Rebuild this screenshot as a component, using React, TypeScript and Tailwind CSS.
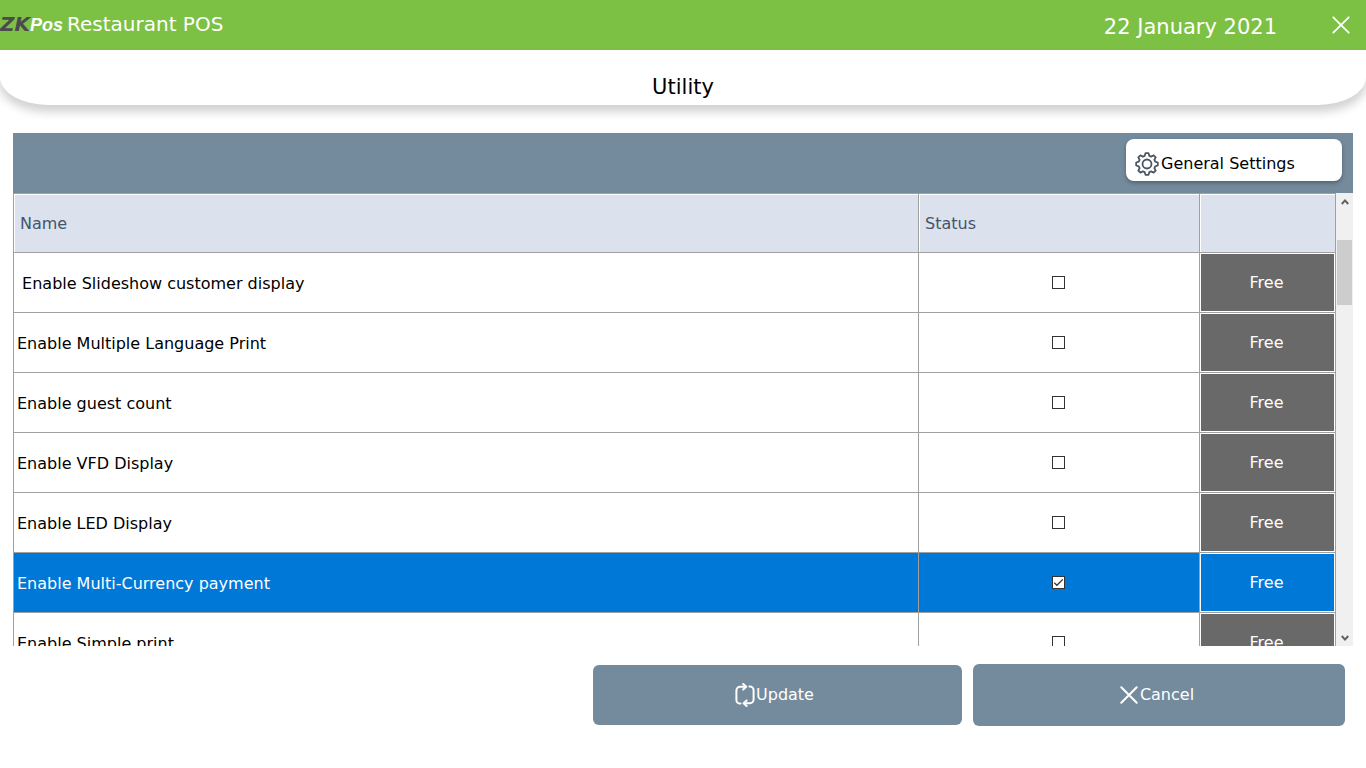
import { useState } from "react";

interface Feature {
  name: string;
  enabled: boolean;
}

const initialFeatures: Feature[] = [
  { name: " Enable Slideshow customer display", enabled: false },
  { name: "Enable Multiple Language Print", enabled: false },
  { name: "Enable guest count", enabled: false },
  { name: "Enable VFD Display", enabled: false },
  { name: "Enable LED Display", enabled: false },
  { name: "Enable Multi-Currency payment", enabled: true },
  { name: "Enable Simple print", enabled: false },
];

function Logo() {
  return (
    <span className="flex items-baseline leading-6 font-bold italic">
      <span className="font-['DejaVu_Sans'] text-xl leading-6 text-[#4a4a4f]">ZK</span>
      <span className="font-['Liberation_Sans'] text-lg leading-6 text-white">Pos</span>
    </span>
  );
}

function CrossIcon({ strokeWidth }: { strokeWidth: number }) {
  return (
    <svg
      className="h-[18px] w-[18px]"
      viewBox="0 0 18 18"
      fill="none"
      stroke="currentColor"
      strokeWidth={strokeWidth}
      strokeLinecap="round"
    >
      <path d="M1.3 1.3 16.7 16.7M16.7 1.3 1.3 16.7" />
    </svg>
  );
}

function GearIcon() {
  return (
    <svg
      className="h-6 w-6"
      viewBox="0 0 24 24"
      fill="none"
      stroke="#4a5661"
      strokeWidth="1.8"
      strokeLinejoin="round"
    >
      <path d="M10.5 1.2h3l.8 2.6 1.9.8 2.4-1.3 2.1 2.1-1.3 2.4.8 1.9 2.6.8v3l-2.6.8-.8 1.9 1.3 2.4-2.1 2.1-2.4-1.3-1.9.8-.8 2.6h-3l-.8-2.6-1.9-.8-2.4 1.3-2.1-2.1 1.3-2.4-.8-1.9-2.6-.8v-3l2.6-.8.8-1.9-1.3-2.4 2.1-2.1 2.4 1.3 1.9-.8z" />
      <circle cx="12" cy="12" r="4.5" />
    </svg>
  );
}

function UpdateIcon() {
  return (
    <svg
      className="h-6 w-5"
      viewBox="0 0 20 24"
      fill="none"
      stroke="currentColor"
      strokeWidth="2"
      strokeLinecap="round"
      strokeLinejoin="round"
    >
      <path d="M5.5 20.6H5a3.6 3.6 0 0 1-3.6-3.6V7.4A3.6 3.6 0 0 1 5 3.8h5.6" />
      <path d="m8.2 1 3 2.8-3 2.8" />
      <path d="M14.4 3.6h.6a3.6 3.6 0 0 1 3.6 3.6v9.4a3.6 3.6 0 0 1-3.6 3.6H9.4" />
      <path d="m11.6 17.4-3 2.8 3 2.8" />
    </svg>
  );
}

function StatusCheckbox({
  label,
  checked,
  onChange,
}: {
  label: string;
  checked: boolean;
  onChange: () => void;
}) {
  return (
    <span className="relative mx-auto block h-[13px] w-[13px]">
      <input
        type="checkbox"
        aria-label={label}
        checked={checked}
        onChange={onChange}
        className="block h-full w-full appearance-none border border-[#333333] bg-white"
      />
      {checked && (
        <svg
          className="pointer-events-none absolute inset-0"
          viewBox="0 0 13 13"
          fill="none"
          stroke="#333333"
          strokeWidth="1.3"
        >
          <path d="M2.2 6.6 4.9 9.3 10.8 3.4" />
        </svg>
      )}
    </span>
  );
}

function ScrollBar() {
  return (
    <div className="flex w-[17px] flex-col items-center bg-[#f0f0f0] text-[#606060]">
      <button aria-label="Scroll up" className="flex h-[17px] w-full items-center justify-center">
        <svg className="h-2 w-2" viewBox="0 0 8 8" fill="none" stroke="currentColor" strokeWidth="2">
          <path d="M.8 6 4 2.4 7.2 6" />
        </svg>
      </button>
      <div className="mt-[30px] h-[65px] w-[15px] bg-[#cdcdcd]" />
      <button aria-label="Scroll down" className="mt-auto flex h-[17px] w-full items-center justify-center">
        <svg className="h-2 w-2" viewBox="0 0 8 8" fill="none" stroke="currentColor" strokeWidth="2">
          <path d="M.8 2 4 5.6 7.2 2" />
        </svg>
      </button>
    </div>
  );
}

export default function App() {
  const [features, setFeatures] = useState(initialFeatures);
  const [selected, setSelected] = useState(5);

  const toggle = (index: number) => {
    setSelected(index);
    setFeatures(features.map((f, i) => (i === index ? { ...f, enabled: !f.enabled } : f)));
  };

  return (
    <div className="flex h-screen flex-col bg-white font-['Verdana','DejaVu_Sans',sans-serif] text-base text-black">
      <header className="flex h-[50px] shrink-0 items-center justify-between bg-[#7cc143] pr-4 text-white">
        <div className="flex items-center gap-1 pb-0.5">
          <Logo />
          <span className="text-xl">Restaurant POS</span>
        </div>
        <div className="flex items-center gap-[55px]">
          <span className="pt-1 text-[21px] leading-7">22 January 2021</span>
          <button aria-label="Close">
            <CrossIcon strokeWidth={1.8} />
          </button>
        </div>
      </header>

      <div className="flex h-[55px] shrink-0 items-end justify-center rounded-b-[48px_28px] pb-1 shadow-[0_6px_10px_1px_rgba(0,0,0,0.18)] [clip-path:inset(0_0_-30px_0)]">
        <h1 className="text-[21px] leading-7">Utility</h1>
      </div>

      <main className="mx-[13px] mt-7 flex min-h-0 flex-1 flex-col">
        <div className="flex h-[60px] shrink-0 items-start justify-end bg-[#748b9e] pt-1.5 pr-[11px]">
          <button className="flex h-[42px] w-[216px] items-center rounded-lg bg-white pt-2 pl-[9px] shadow-[0_2px_4px_rgba(0,0,0,0.3)]">
            <GearIcon />
            <span className="pl-0.5">General Settings</span>
          </button>
        </div>

        <div className="flex min-h-0 flex-1">
          <div className="min-w-0 flex-1 overflow-hidden">
            <table className="w-full table-fixed border-separate border-spacing-0 border-l border-[#a0a0a0]">
              <colgroup>
                <col />
                <col className="w-[281px]" />
                <col className="w-[136px]" />
              </colgroup>
              <thead>
                <tr className="h-[60px] text-left text-[#44546a]">
                  <th className="border-y border-r border-[#a0a0a0] bg-[#dbe2ee] pt-0.5 pl-1.5 font-normal shadow-[inset_1px_1px_0_#ffffff]">
                    Name
                  </th>
                  <th className="border-y border-r border-[#a0a0a0] bg-[#dbe2ee] pt-0.5 pl-1.5 font-normal shadow-[inset_1px_1px_0_#ffffff]">
                    Status
                  </th>
                  <th
                    aria-label="Licence"
                    className="border-y border-r border-[#a0a0a0] bg-[#dbe2ee] shadow-[inset_1px_1px_0_#ffffff]"
                  />
                </tr>
              </thead>
              <tbody>
                {features.map((feature, i) => (
                  <tr
                    key={feature.name}
                    onClick={() => setSelected(i)}
                    className={`h-[60px] ${i === selected ? "bg-[#0078d7] text-white" : "bg-white"}`}
                  >
                    <td className="border-r border-b border-[#a0a0a0] pt-0.5 pl-[3px] whitespace-pre">
                      {feature.name}
                    </td>
                    <td className="border-r border-b border-[#a0a0a0] pr-px">
                      <StatusCheckbox
                        label={feature.name.trim()}
                        checked={feature.enabled}
                        onChange={() => toggle(i)}
                      />
                    </td>
                    <td className="border-r border-b border-[#a0a0a0] bg-white p-px">
                      <button
                        className={`block h-[57px] w-full pr-0.5 text-white ${
                          i === selected ? "bg-[#0078d7]" : "bg-[#696969]"
                        }`}
                      >
                        Free
                      </button>
                    </td>
                  </tr>
                ))}
              </tbody>
            </table>
          </div>
          <ScrollBar />
        </div>
      </main>

      <footer className="flex shrink-0 items-center justify-end gap-[11px] pt-[18px] pr-[21px] pb-[42px] text-white">
        <button className="flex h-[60px] w-[369px] items-center justify-center gap-px rounded-md bg-[#748b9e] pr-1.5">
          <UpdateIcon />
          <span>Update</span>
        </button>
        <button className="flex h-[62px] w-[372px] items-center justify-center gap-0.5 rounded-md bg-[#748b9e] pr-1">
          <CrossIcon strokeWidth={2} />
          <span>Cancel</span>
        </button>
      </footer>
    </div>
  );
}
